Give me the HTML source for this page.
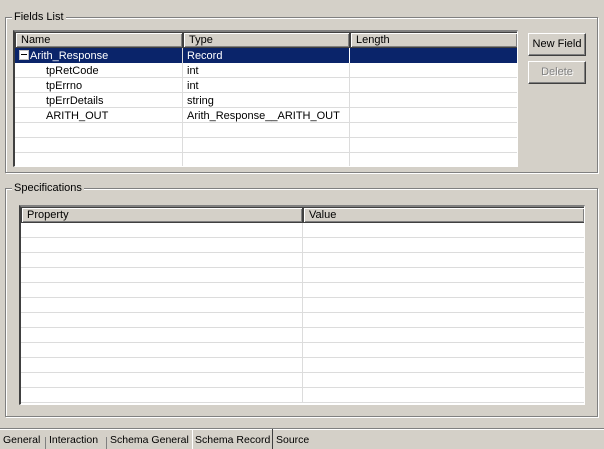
<!DOCTYPE html>
<html><head><style>
*{box-sizing:border-box;margin:0;padding:0}
body{width:604px;height:449px;background:#d4d0c8;font-family:"Liberation Sans",Tahoma,sans-serif;font-size:11px;color:#000;position:relative;overflow:hidden}
.abs{position:absolute}
.grp{position:absolute;border:1px solid #808080;box-shadow:inset 1px 1px 0 #fff,1px 1px 0 #fff}
.lbl{position:absolute;background:#d4d0c8;padding:0 2px;line-height:13px}
.tbl{position:absolute;background:#fff;border-top:2px solid #808080;border-left:2px solid #404040;border-right:1px solid #fff;border-bottom:1px solid #fff;overflow:hidden}
.hdr{position:absolute;top:0;height:16px;background:#d4d0c8;border:1px solid #404040;box-shadow:inset 1px 1px 0 #fff,inset -1px -1px 0 #808080;padding-left:5px;line-height:15px}
.row{position:absolute;left:0;right:0;height:15px;border-bottom:1px solid #dcdcdc;line-height:15px}
.cell{position:absolute;top:0;height:15px;border-right:1px solid #dcdcdc;padding-left:4px;padding-top:2px;line-height:13px;white-space:nowrap}
.btn{position:absolute;width:58px;height:23px;background:#d4d0c8;border:1px solid;border-color:#fff #404040 #404040 #fff;box-shadow:inset -1px -1px 0 #808080;text-align:center;line-height:21px}
.tab{position:absolute;top:432px;line-height:17px;white-space:nowrap;font-size:10.5px}
</style></head><body>
<div class="grp" style="left:5px;top:17px;width:593px;height:156px"></div>
<div class="lbl" style="left:12px;top:11px">Fields List</div>
<div class="tbl" style="left:13px;top:30px;width:505px;height:137px">
 <div class="hdr" style="left:0;width:168px">Name</div>
 <div class="hdr" style="left:168px;width:167px">Type</div>
 <div class="hdr" style="left:335px;width:168px">Length</div>
 <div class="row" style="top:16px;background:#0a246a;color:#fff;border-bottom-color:#0a246a"><div class="cell" style="left:0;width:168px;padding-left:4px"><span style="display:inline-block;width:10px;height:10px;border:1px solid #c0c0c0;background:#fff;vertical-align:-1px;position:relative;margin-right:1px"><span style="position:absolute;left:1px;top:3px;width:6px;height:1px;background:#000"></span></span>Arith_Response</div><div class="cell" style="left:168px;width:167px;border-right-color:#fff">Record</div></div>
 <div class="row" style="top:31px"><div class="cell" style="left:0;width:168px;padding-left:31px">tpRetCode</div><div class="cell" style="left:168px;width:167px">int</div></div>
 <div class="row" style="top:46px"><div class="cell" style="left:0;width:168px;padding-left:31px">tpErrno</div><div class="cell" style="left:168px;width:167px">int</div></div>
 <div class="row" style="top:61px"><div class="cell" style="left:0;width:168px;padding-left:31px">tpErrDetails</div><div class="cell" style="left:168px;width:167px">string</div></div>
 <div class="row" style="top:76px"><div class="cell" style="left:0;width:168px;padding-left:31px">ARITH_OUT</div><div class="cell" style="left:168px;width:167px">Arith_Response__ARITH_OUT</div></div>
 <div class="row" style="top:91px"><div class="cell" style="left:0;width:168px"></div><div class="cell" style="left:168px;width:167px"></div></div>
 <div class="row" style="top:106px"><div class="cell" style="left:0;width:168px"></div><div class="cell" style="left:168px;width:167px"></div></div>
 <div class="row" style="top:121px;border-bottom:none"><div class="cell" style="left:0;width:168px"></div><div class="cell" style="left:168px;width:167px"></div></div>
</div>
<div class="btn" style="left:528px;top:33px">New Field</div>
<div class="btn" style="left:528px;top:61px;color:#808080;text-shadow:1px 1px 0 #fff">Delete</div>

<div class="grp" style="left:5px;top:188px;width:593px;height:229px"></div>
<div class="lbl" style="left:12px;top:182px">Specifications</div>
<div class="tbl" style="left:19px;top:205px;width:566px;height:200px">
 <div class="hdr" style="left:0;width:282px">Property</div>
 <div class="hdr" style="left:282px;width:282px">Value</div>
 <div id="sp"></div>
</div>
<div class="abs" style="left:0;top:428px;width:604px;height:1px;background:#808080"></div>
<div class="abs" style="left:0;top:429px;width:604px;height:1px;background:#fff"></div>
<div class="abs" style="left:192px;top:429px;width:81px;height:20px;border:1px solid #fff;border-right-color:#404040;border-top:none;border-bottom:none"></div>
<div class="tab" style="left:3px">General</div>
<div class="abs" style="left:45px;top:437px;width:1px;height:12px;background:#808080"></div>
<div class="tab" style="left:49px">Interaction</div>
<div class="abs" style="left:106px;top:437px;width:1px;height:12px;background:#808080"></div>
<div class="tab" style="left:110px">Schema General</div>
<div class="tab" style="left:195px">Schema Record</div>
<div class="tab" style="left:276px">Source</div>
<script>
var h='';for(var i=0;i<12;i++){h+='<div class="row" style="top:'+(16+i*15)+'px"><div class="cell" style="left:0;width:282px"></div></div>';}
document.getElementById('sp').innerHTML=h;
</script>
</body></html>
